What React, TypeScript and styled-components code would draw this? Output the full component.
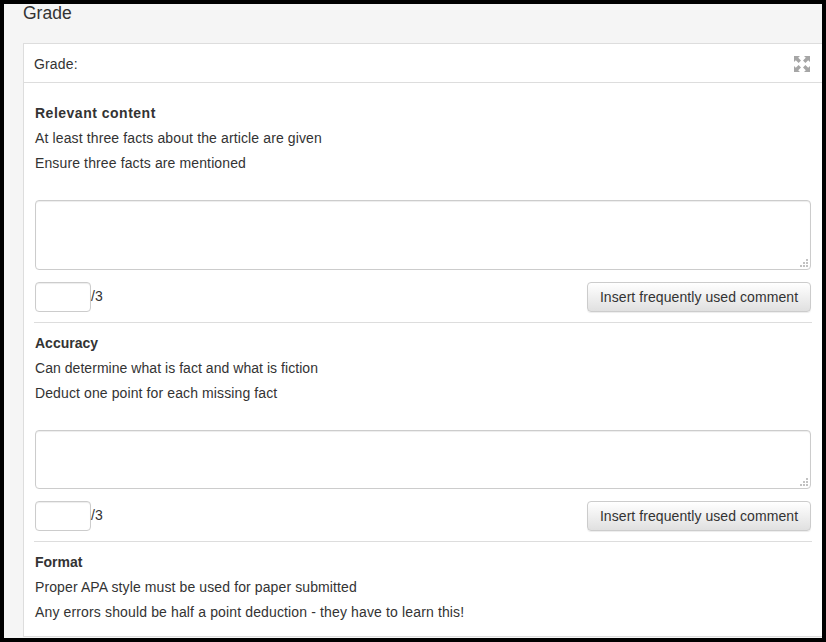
import React from "react";
import styled, { createGlobalStyle } from "styled-components";

const Global = createGlobalStyle`
  html, body { margin: 0; padding: 0; background: #000; }
  body { font-family: "Liberation Sans", Arial, sans-serif; color: #333; font-size: 14px; }
`;

const Frame = styled.div`
  box-sizing: border-box;
  width: 826px;
  height: 642px;
  border: solid #000;
  border-width: 4px;
  background: #f5f5f5;
  overflow: hidden;
  padding-left: 19px;
`;

const PageTitle = styled.h2`
  margin: 0;
  height: 39px;
  box-sizing: border-box;
  font-size: 17.5px;
  line-height: 18px;
  font-weight: 400;
  color: #333;
`;

const Panel = styled.section`
  box-sizing: border-box;
  width: 830px;
  height: 594px;
  background: #fff;
  border: 1px solid #ddd;
`;

const PanelHeader = styled.header`
  box-sizing: border-box;
  height: 39px;
  width: 798px;
  padding: 2px 10px 0;
  display: flex;
  align-items: center;
  justify-content: space-between;
  border-bottom: 1px solid #ddd;
  font-size: 14px;
  letter-spacing: 0.15px;
`;

const ExpandIcon = styled.svg`
  width: 16px;
  height: 16px;
  margin-right: 2px;
  display: block;
  fill: #a6a6a6;
`;

const Body = styled.div`
  width: 788px;
  padding: 0 0 0 10px;
`;

const Criterion = styled.div<{ $pad: number }>`
  width: 777px;
  padding: ${(p) => p.$pad}px 0 10px 1px;
  border-bottom: 1px solid #ddd;
  &:last-child { border-bottom: 0; }
`;

const Name = styled.div<{ $spacing: number }>`
  font-weight: 700;
  line-height: 20px;
  margin-bottom: 5px;
  letter-spacing: ${(p) => p.$spacing}px;
`;

const Line = styled.div<{ $spacing: number }>`
  line-height: 20px;
  margin-bottom: 5px;
  letter-spacing: ${(p) => p.$spacing}px;
`;

const CommentWrap = styled.div`
  position: relative;
  width: 776px;
  margin: 27px 0 12px;
`;

const Comment = styled.textarea<{ $height: number }>`
  box-sizing: border-box;
  display: block;
  width: 776px;
  height: ${(p) => p.$height}px;
  border: 1px solid #ccc;
  border-radius: 4px;
  background: #fff;
  box-shadow: inset 0 1px 1px rgba(0, 0, 0, 0.075);
  resize: none;
`;

const Grip = styled.svg`
  position: absolute;
  right: 3px;
  bottom: 3px;
  width: 8px;
  height: 8px;
  fill: #c2c2c2;
  pointer-events: none;
`;

const ScoreRow = styled.div`
  display: flex;
  align-items: center;
  width: 776px;
`;

const ScoreInput = styled.input`
  box-sizing: border-box;
  width: 56px;
  height: 30px;
  padding: 0 8px;
  border: 1px solid #ccc;
  border-radius: 4px;
  background: #fff;
  box-shadow: inset 0 1px 1px rgba(0, 0, 0, 0.075);
`;

const Max = styled.span`
  flex: 1;
  font-size: 14px;
  padding-bottom: 2px;
`;

const InsertButton = styled.button`
  box-sizing: border-box;
  width: 224px;
  height: 30px;
  padding: 0;
  border: 1px solid #ccc;
  border-radius: 4px;
  background: linear-gradient(to bottom, #fff 0%, #e0e0e0 100%);
  box-shadow: inset 0 1px 0 rgba(255, 255, 255, 0.15), 0 1px 1px rgba(0, 0, 0, 0.075);
  color: #333;
  font: 14px "Liberation Sans", Arial, sans-serif;
  letter-spacing: 0.07px;
`;

const criteria = [
  {
    name: "Relevant content",
    spacing: 0.5,
    lines: [
      { text: "At least three facts about the article are given", spacing: 0.125 },
      { text: "Ensure three facts are mentioned", spacing: 0.125 },
    ],
    area: 70,
    pad: 20,
    score: true,
  },
  {
    name: "Accuracy",
    spacing: 0,
    lines: [
      { text: "Can determine what is fact and what is fiction", spacing: 0.045 },
      { text: "Deduct one point for each missing fact", spacing: 0.11 },
    ],
    area: 59,
    pad: 10,
    score: true,
  },
  {
    name: "Format",
    spacing: 0,
    lines: [
      { text: "Proper APA style must be used for paper submitted", spacing: 0.11 },
      { text: "Any errors should be half a point deduction - they have to learn this!", spacing: 0.14 },
    ],
    area: 0,
    pad: 10,
    score: false,
  },
];

export default function App() {
  return (
    <Frame>
      <Global />
      <PageTitle>Grade</PageTitle>
      <Panel>
        <PanelHeader>
          <span>Grade:</span>
          <ExpandIcon viewBox="0 0 16 16" aria-hidden="true">
            <path d="M0 0h6L4.2 1.8 7 4.6 4.6 7 1.8 4.2 0 6z" />
            <path d="M16 0h-6l1.8 1.8L9 4.6 11.4 7l2.8-2.8L16 6z" />
            <path d="M0 16h6l-1.8-1.8L7 11.4 4.6 9l-2.8 2.8L0 10z" />
            <path d="M16 16h-6l1.8-1.8L9 11.4 11.4 9l2.8 2.8L16 10z" />
          </ExpandIcon>
        </PanelHeader>
        <Body>
          {criteria.map((c) => (
            <Criterion key={c.name} $pad={c.pad}>
              <Name $spacing={c.spacing}>{c.name}</Name>
              {c.lines.map((l) => (
                <Line key={l.text} $spacing={l.spacing}>{l.text}</Line>
              ))}
              {c.score && (
                <>
                  <CommentWrap>
                    <Comment $height={c.area} />
                    <Grip viewBox="0 0 8 8" aria-hidden="true">
                      <rect x="6" y="0" width="2" height="2" />
                      <rect x="3" y="3" width="2" height="2" />
                      <rect x="6" y="3" width="2" height="2" />
                      <rect x="0" y="6" width="2" height="2" />
                      <rect x="3" y="6" width="2" height="2" />
                      <rect x="6" y="6" width="2" height="2" />
                    </Grip>
                  </CommentWrap>
                  <ScoreRow>
                    <ScoreInput type="text" />
                    <Max>/3</Max>
                    <InsertButton>Insert frequently used comment</InsertButton>
                  </ScoreRow>
                </>
              )}
            </Criterion>
          ))}
        </Body>
      </Panel>
    </Frame>
  );
}
